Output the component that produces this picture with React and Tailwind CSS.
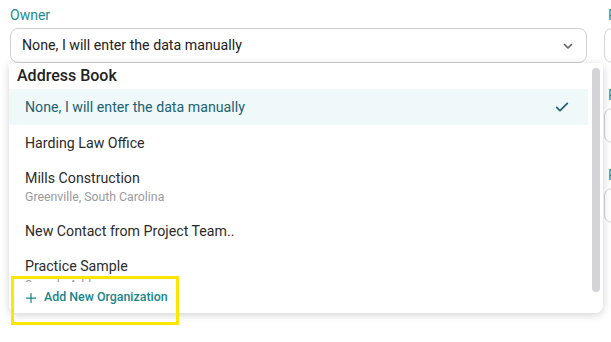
import React from "react";

const rows = [
  { title: "None, I will enter the data manually", selected: true },
  { title: "Harding Law Office" },
  { title: "Mills Construction", sub: "Greenville, South Carolina" },
  { title: "New Contact from Project Team.." },
  { title: "Practice Sample", sub: "Sample Address" },
];

const Field = () => (
  <div className="h-[80px] pt-[5px]">
    <div className="h-[20px] pl-[4px] text-[14px] leading-[20px] text-[#1b8a91]">Phone</div>
    <div className="mt-[3px] h-[35px] rounded-[8px] border border-[#d4d4d4] bg-white" />
  </div>
);

export default function App() {
  return (
    <div
      className="relative h-[342px] w-[611px] overflow-hidden bg-white"
      style={{ fontFamily: "Roboto, 'Liberation Sans', sans-serif" }}
    >
      <div className="flex gap-[17px] pl-[10px]">
        {/* Owner field */}
        <div className="relative w-[577px] shrink-0 pt-[5px]">
          <div className="h-[20px] text-[14px] leading-[20px] text-[#1b8a91]">Owner</div>
          <div className="mt-[3px] flex h-[35px] items-center justify-between rounded-[8px] border border-[#d0d0d0] bg-white pl-[11px] pr-[12px] text-[14.2px] text-[#222]">
            <span>None, I will enter the data manually</span>
            <svg width="12" height="12" viewBox="0 0 24 24" fill="none" stroke="#5b5b5b" strokeWidth="3" strokeLinecap="round" strokeLinejoin="round">
              <path d="M5 9l7 7 7-7" />
            </svg>
          </div>

          {/* Dropdown panel */}
          <div className="absolute left-[-1px] top-[63px] z-10 flex h-[250px] w-[594px] flex-col overflow-hidden rounded-b-[8px] rounded-t-[4px] bg-white shadow-[0_2px_8px_rgba(0,0,0,0.18)]">
            <div className="h-[26px] shrink-0 pl-[8px] pt-[3px] text-[16px] font-medium leading-[20px] text-[#222]">
              Address Book
            </div>
            <div className="h-[193px] w-[579px] shrink-0 overflow-hidden">
              {rows.map((r) => (
                <div
                  key={r.title}
                  className={`flex items-center justify-between pl-[16px] pr-[18px] ${r.sub ? "h-[52px]" : "h-[36px]"} ${r.selected ? "bg-[#eff9fa]" : ""}`}
                >
                  <div className="flex flex-col">
                    <span className={`text-[14.2px] leading-[20px] ${r.selected ? "text-[#1e6170]" : "text-[#2b2b2b]"}`}>{r.title}</span>
                    {r.sub && <span className="text-[12.3px] leading-[18px] text-[#9a9aa0]">{r.sub}</span>}
                  </div>
                  {r.selected && (
                    <svg width="16" height="16" viewBox="0 0 24 24" fill="none" stroke="#1e5f6e" strokeWidth="2.5" strokeLinecap="round" strokeLinejoin="round">
                      <path d="M4 12.5l5 5L20 6.5" />
                    </svg>
                  )}
                </div>
              ))}
            </div>
            <div className="flex h-[31px] items-center gap-[7px] bg-white pl-[16px] text-[12.4px] font-medium text-[#17868c]">
              <svg width="12" height="12" viewBox="0 0 24 24" fill="none" stroke="#17868c" strokeWidth="2.5" strokeLinecap="round">
                <path d="M12 3v18M3 12h18" />
              </svg>
              <span>Add New Organization</span>
            </div>
            {/* scrollbar */}
            <div className="absolute right-[3px] top-[5px] h-[224px] w-[8px] rounded-full bg-[#d4d4d8]" />
          </div>
        </div>

        {/* Right column (partially visible) */}
        <div className="w-[200px] shrink-0">
          <Field />
          <Field />
          <Field />
        </div>
      </div>

      {/* Annotation highlight */}
      <div className="absolute left-[11px] top-[276px] z-20 h-[49px] w-[168px] border-[3px] border-[#ffe600]" />
    </div>
  );
}
